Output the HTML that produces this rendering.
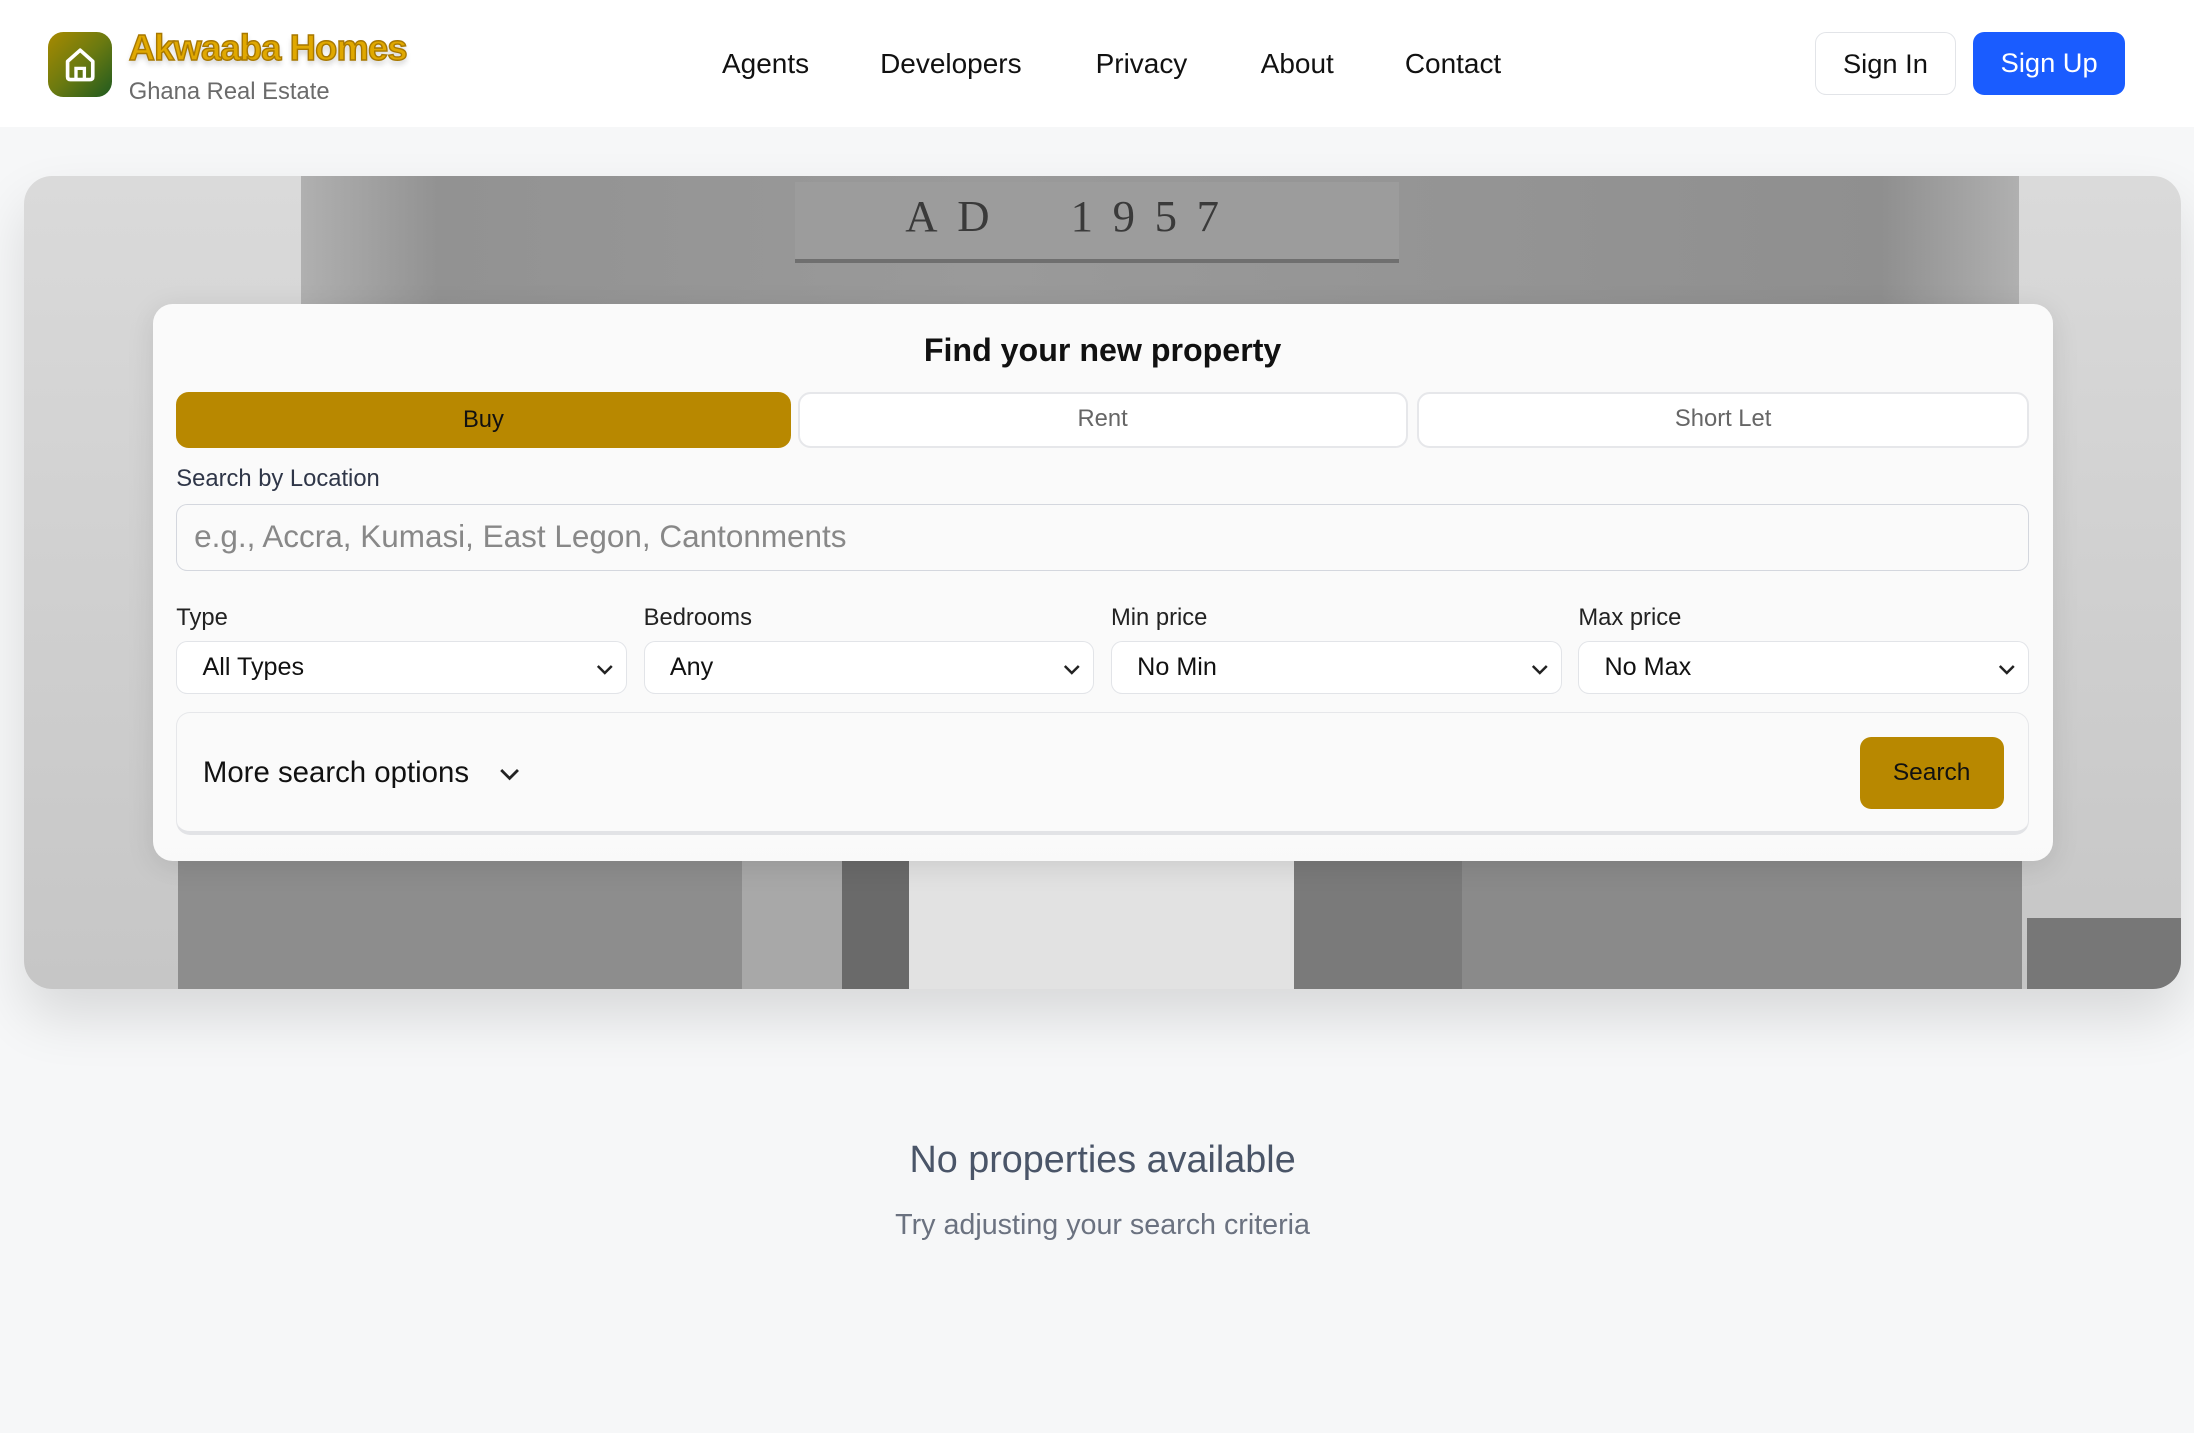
<!DOCTYPE html>
<html><head><meta charset="utf-8"><style>
html{zoom:1.39923}
body{margin:0;background:#f6f7f8;font-family:"Liberation Sans",sans-serif;width:1568px;height:1024px;overflow:hidden;position:relative}
.hdr{position:absolute;left:0;top:0;width:1568px;height:91px;background:#fff}
.logo{position:absolute;left:34px;top:23px;width:46px;height:46px;border-radius:11px;background:linear-gradient(135deg,#a88a00,#6b7a10 50%,#1f5a20)}
.t1{position:absolute;left:92px;top:19px;font-size:26px;font-weight:bold;color:#e0a800;-webkit-text-stroke:1px #a87800;text-shadow:0 3px 4px rgba(0,0,0,.2);letter-spacing:-.6px}
.t2{position:absolute;left:92px;top:56px;font-size:17px;color:#6b6b6b}
.nav a{position:absolute;top:34px;font-size:20px;color:#111}
.btn{position:absolute;top:23px;height:45px;border-radius:8px;font-size:19.5px;line-height:45px;text-align:center;box-sizing:border-box}
.hero{position:absolute;left:17px;top:126px;width:1542px;height:581px;border-radius:20px;overflow:hidden;background:linear-gradient(180deg,#dadada,#c6c6c6);box-shadow:0 20px 40px rgba(0,0,0,.12)}
.hero div{position:absolute}
.card{position:absolute;left:109px;top:217px;width:1358px;height:398px;border-radius:14px;background:rgba(252,252,252,.95);box-shadow:0 4px 20px rgba(0,0,0,.1)}
.ab{position:absolute}
.lbl{position:absolute;font-size:17px;color:#222}
.sel{position:absolute;top:458px;width:322px;height:38px;border:1px solid #e2e4e8;border-radius:8px;background:#fff;box-sizing:border-box;font-size:18px;line-height:36px;padding-left:18px;color:#111}
.sel svg{position:absolute;right:8px;top:12px}
</style></head><body>
<div class="hdr">
<div class="logo"><svg width="46" height="46" viewBox="0 0 46 46"><path d="M14 21 L23 13 L32 21 V32 Q32 34 30 34 H16 Q14 34 14 32 Z" fill="none" stroke="#fff" stroke-width="2.6" stroke-linejoin="round"/><path d="M20 34 V26 H26 V34" fill="none" stroke="#fff" stroke-width="2.4"/></svg></div>
<div class="t1">Akwaaba Homes</div>
<div class="t2">Ghana Real Estate</div>
<div class="nav"><a style="left:516px">Agents</a><a style="left:629px">Developers</a><a style="left:783px">Privacy</a><a style="left:901px">About</a><a style="left:1004px">Contact</a></div>
<div class="btn" style="left:1297px;width:101px;border:1px solid #e2e4e8;color:#111">Sign In</div>
<div class="btn" style="left:1410px;width:109px;background:#1a5cff;color:#fff">Sign Up</div>
</div>
<div class="hero">
<div style="left:198px;top:0;width:1228px;height:91px;background:linear-gradient(90deg,#b0b0b0,#929292 8%,#9a9a9a 40%,#8f8f8f 92%,#b0b0b0)"></div>
<div style="left:551px;top:4px;width:432px;height:58px;border-bottom:3px solid #6f6f6f;box-sizing:border-box;background:#9c9c9c"></div>
<div style="left:630px;top:10px;font-family:'Liberation Serif',serif;font-size:32px;color:#3a3a3a;letter-spacing:14px">AD&nbsp;&nbsp;1957</div>
<div style="left:110px;top:489px;width:403px;height:92px;background:#8d8d8d"></div>
<div style="left:513px;top:489px;width:120px;height:92px;background:#a8a8a8"></div>
<div style="left:585px;top:489px;width:48px;height:92px;background:#6a6a6a"></div>
<div style="left:633px;top:489px;width:275px;height:92px;background:#e2e2e2"></div>
<div style="left:908px;top:489px;width:120px;height:92px;background:#7a7a7a"></div>
<div style="left:1028px;top:489px;width:400px;height:92px;background:#8a8a8a"></div>
<div style="left:1432px;top:530px;width:110px;height:51px;background:#777"></div>
</div>
<div class="card"></div>
<div class="ab" style="left:0;width:1576px;top:237px;text-align:center;font-size:23px;font-weight:bold;color:#111">Find your new property</div>
<div class="ab" style="left:126px;top:280px;width:439px;height:40px;border-radius:9px;background:#b88800;text-align:center;line-height:40px;font-size:17px;color:#111">Buy</div>
<div class="ab" style="left:570px;top:280px;width:436px;height:40px;border-radius:9px;background:#fff;border:2px solid #e6e7ea;box-sizing:border-box;text-align:center;line-height:36px;font-size:17px;color:#666">Rent</div>
<div class="ab" style="left:1013px;top:280px;width:437px;height:40px;border-radius:9px;background:#fff;border:2px solid #e6e7ea;box-sizing:border-box;text-align:center;line-height:36px;font-size:17px;color:#666">Short Let</div>
<div class="lbl" style="left:126px;top:332px;color:#2f3648">Search by Location</div>
<div class="ab" style="left:126px;top:360px;width:1324px;height:48px;border:1px solid #d4d7de;border-radius:8px;box-sizing:border-box;font-size:22.5px;line-height:46px;padding-left:12px;color:#888">e.g., Accra, Kumasi, East Legon, Cantonments</div>
<div class="lbl" style="left:126px;top:432px">Type</div><div class="lbl" style="left:460px;top:432px">Bedrooms</div><div class="lbl" style="left:794px;top:432px">Min price</div><div class="lbl" style="left:1128px;top:432px">Max price</div>
<div class="sel" style="left:126px">All Types<svg width="14" height="14" viewBox="0 0 14 14"><path d="M2 5l5 5 5-5" fill="none" stroke="#222" stroke-width="1.8"/></svg></div>
<div class="sel" style="left:460px">Any<svg width="14" height="14" viewBox="0 0 14 14"><path d="M2 5l5 5 5-5" fill="none" stroke="#222" stroke-width="1.8"/></svg></div>
<div class="sel" style="left:794px">No Min<svg width="14" height="14" viewBox="0 0 14 14"><path d="M2 5l5 5 5-5" fill="none" stroke="#222" stroke-width="1.8"/></svg></div>
<div class="sel" style="left:1128px">No Max<svg width="14" height="14" viewBox="0 0 14 14"><path d="M2 5l5 5 5-5" fill="none" stroke="#222" stroke-width="1.8"/></svg></div>
<div class="ab" style="left:126px;top:509px;width:1324px;height:88px;border:1px solid #e6e7ea;border-bottom:3px solid #e2e3e6;border-radius:10px;box-sizing:border-box;background:rgba(250,250,250,.6)"></div>
<div class="ab" style="left:145px;top:540px;font-size:21px;color:#111">More search options</div>
<svg class="ab" style="left:355px;top:545px" width="18" height="16" viewBox="0 0 18 16"><path d="M3 5l6 6 6-6" fill="none" stroke="#222" stroke-width="2"/></svg>
<div class="ab" style="left:1329px;top:527px;width:103px;height:51px;border-radius:8px;background:#b88800;text-align:center;line-height:51px;font-size:17.5px;color:#111">Search</div>
<div class="ab" style="left:0;width:1576px;top:814px;text-align:center;font-size:27px;color:#4a5568">No properties available</div>
<div class="ab" style="left:0;width:1576px;top:864px;text-align:center;font-size:20.5px;color:#6b7280">Try adjusting your search criteria</div>
</body></html>
